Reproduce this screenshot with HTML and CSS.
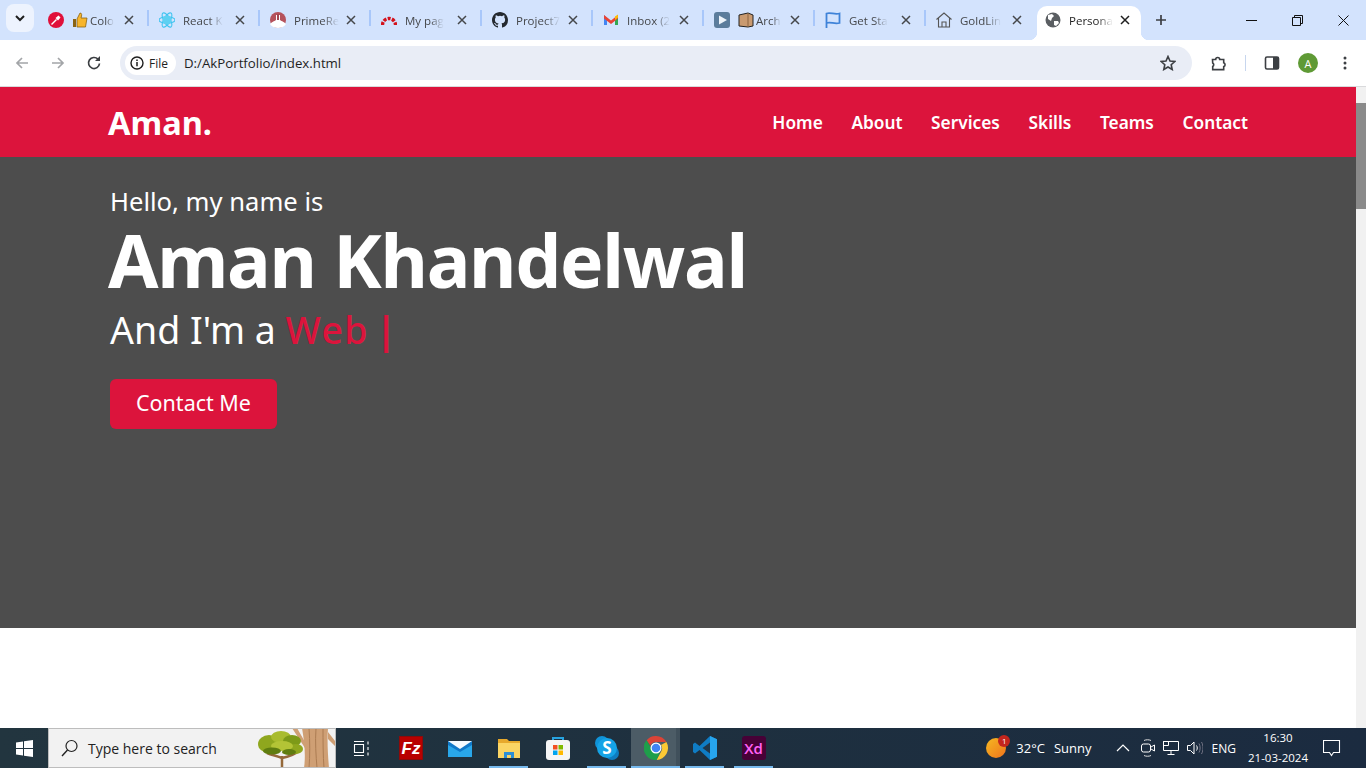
FILE: index.html
```html
<!DOCTYPE html>
<html lang="en">
  <head>
    <meta charset="UTF-8" />
    <meta name="viewport" content="width=device-width, initial-scale=1.0" />
    <title>Personal Portfolio</title>
    <link rel="stylesheet" href="styles.css">
  </head>
  <body>
    <!-- browser tabs -->
    <div class="tabstrip">
      <div class="tab-search">
        <svg width="12" height="12" viewBox="0 0 12 12"><path d="M2 4l4 4 4-4" fill="none" stroke="#1f1f1f" stroke-width="2"/></svg>
      </div>
      <div class="tab">
        <svg class="fav" viewBox="0 0 16 16"><circle cx="8" cy="8" r="8" fill="#e0103a"/><path d="M3.500 12.500l5-5" stroke="#fff" stroke-width="1.400"/><path d="M7.500 6l3-2.500 2 2L10 8.500z" fill="#fff"/></svg>
        <svg class="fav" viewBox="0 0 16 16"><path d="M1 7h3v8H1z" fill="#8a6414"/><path d="M5 7l3-6c2 0 2 2 1 5h6l-1.500 9H5z" fill="#f7b52c" stroke="#8a6414" stroke-width=".8"/></svg>
        <span class="tab-title tab-title-short">Colo</span>
        <svg class="tab-close" viewBox="0 0 10 10"><path d="M1 1l8 8M9 1l-8 8"/></svg>
      </div>
      <i class="tab-sep"></i>
      <div class="tab">
        <svg class="fav" viewBox="0 0 16 16"><g fill="none" stroke="#3fc4f0" stroke-width="1.100"><ellipse cx="8" cy="8" rx="8" ry="3.200"/><ellipse cx="8" cy="8" rx="8" ry="3.200" transform="rotate(60 8 8)"/><ellipse cx="8" cy="8" rx="8" ry="3.200" transform="rotate(120 8 8)"/></g><circle cx="8" cy="8" r="4.500" fill="#5ed0f2"/></svg>
        <span class="tab-title">React K</span>
        <svg class="tab-close" viewBox="0 0 10 10"><path d="M1 1l8 8M9 1l-8 8"/></svg>
      </div>
      <i class="tab-sep"></i>
      <div class="tab">
        <svg class="fav" viewBox="0 0 16 16"><circle cx="8" cy="8" r="8" fill="#b5525c"/><path d="M0 12c3-3 5-3 6-4V3h4v5c1 1 3 1 6 4-2 3-5 4-8 4s-6-1-8-4z" fill="#fff"/><path d="M7 2h2v6H7z" fill="#a34550"/></svg>
        <span class="tab-title">PrimeRe</span>
        <svg class="tab-close" viewBox="0 0 10 10"><path d="M1 1l8 8M9 1l-8 8"/></svg>
      </div>
      <i class="tab-sep"></i>
      <div class="tab">
        <svg class="fav" viewBox="0 0 16 16"><path d="M1.500 13a6.500 6.500 0 0 1 13 0" fill="none" stroke="#d3121c" stroke-width="3.400" stroke-dasharray="3 1.300"/></svg>
        <span class="tab-title">My pag</span>
        <svg class="tab-close" viewBox="0 0 10 10"><path d="M1 1l8 8M9 1l-8 8"/></svg>
      </div>
      <i class="tab-sep"></i>
      <div class="tab">
        <svg class="fav" viewBox="0 0 16 16"><path fill="#24292f" d="M8 0C3.580 0 0 3.580 0 8c0 3.540 2.290 6.530 5.470 7.590.4.070.55-.17.55-.38 0-.19-.01-.82-.01-1.490-2.010.37-2.530-.49-2.690-.94-.09-.23-.48-.94-.82-1.130-.28-.15-.68-.52-.01-.53.63-.01 1.080.58 1.230.82.720 1.210 1.870.87 2.330.66.070-.52.280-.87.510-1.070-1.780-.2-3.640-.89-3.640-3.950 0-.87.310-1.590.820-2.150-.08-.2-.36-1.020.08-2.120 0 0 .67-.21 2.200.82a7.420 7.420 0 0 1 4 0c1.530-1.040 2.200-.82 2.200-.82.440 1.100.16 1.920.08 2.120.51.560.82 1.270.82 2.150 0 3.070-1.870 3.750-3.650 3.950.290.250.540.730.540 1.480 0 1.070-.01 1.930-.01 2.200 0 .21.150.46.550.38A8.010 8.010 0 0 0 16 8c0-4.420-3.580-8-8-8z"/></svg>
        <span class="tab-title">Project7</span>
        <svg class="tab-close" viewBox="0 0 10 10"><path d="M1 1l8 8M9 1l-8 8"/></svg>
      </div>
      <i class="tab-sep"></i>
      <div class="tab">
        <svg class="fav" viewBox="0 0 16 16"><path d="M1 3v10h3V6z" fill="#4285f4"/><path d="M15 3v10h-3V6z" fill="#34a853"/><path d="M1 3l7 5.500L15 3v3.500L8 12 1 6.500z" fill="#ea4335"/><path d="M12 4.500L15 2.500v3L12 8z" fill="#fbbc04"/></svg>
        <span class="tab-title">Inbox (2</span>
        <svg class="tab-close" viewBox="0 0 10 10"><path d="M1 1l8 8M9 1l-8 8"/></svg>
      </div>
      <i class="tab-sep"></i>
      <div class="tab">
        <svg class="fav" viewBox="0 0 16 16"><rect width="16" height="16" rx="3" fill="#5c7d9c"/><path d="M5 3.500l8 4.500-8 4.500z" fill="#eef4fa"/></svg>
        <svg class="fav" viewBox="0 0 16 16"><path d="M1 3l9-2 5 2v11l-5 1-9-1z" fill="#c99a70" stroke="#222" stroke-width="1"/><path d="M10 1v14" stroke="#8c6440"/></svg>
        <span class="tab-title tab-title-short">Arch</span>
        <svg class="tab-close" viewBox="0 0 10 10"><path d="M1 1l8 8M9 1l-8 8"/></svg>
      </div>
      <i class="tab-sep"></i>
      <div class="tab">
        <svg class="fav" viewBox="0 0 16 16"><path d="M1.500 16V1.500c4-1.500 8 1.500 13 0V11c-5 1.500-9-1.500-13 0" fill="none" stroke="#3f83d8" stroke-width="1.800"/></svg>
        <span class="tab-title">Get Sta</span>
        <svg class="tab-close" viewBox="0 0 10 10"><path d="M1 1l8 8M9 1l-8 8"/></svg>
      </div>
      <i class="tab-sep"></i>
      <div class="tab">
        <svg class="fav" viewBox="0 0 16 16"><path d="M.5 7.500L8 1l7.500 6.500M2.500 6v9h11V6M6 15v-5h4v5" fill="none" stroke="#555" stroke-width="1.100"/></svg>
        <span class="tab-title">GoldLin</span>
        <svg class="tab-close" viewBox="0 0 10 10"><path d="M1 1l8 8M9 1l-8 8"/></svg>
      </div>
      <div class="tab tab-active">
        <svg class="fav" viewBox="0 0 16 16"><circle cx="8" cy="8" r="7.500" fill="#5a5e62"/><path d="M3 3l4-1 2 2-2 2-1 3-3-2zM9 9l4 0 1 2-3 3-2-1z" fill="#fff"/></svg>
        <span class="tab-title">Persona</span>
        <svg class="tab-close" viewBox="0 0 10 10"><path d="M1 1l8 8M9 1l-8 8"/></svg>
      </div>
      <svg class="new-tab" width="12" height="12" viewBox="0 0 12 12"><path d="M6 1v10M1 6h10" stroke="#3c3f43" stroke-width="1.700"/></svg>
      <div class="win-controls">
        <div class="win-btn"><svg width="11" height="11" viewBox="0 0 11 11"><path d="M0 5.500h11" stroke="#111" fill="none"/></svg></div>
        <div class="win-btn"><svg width="11" height="11" viewBox="0 0 11 11"><path d="M.5 2.500h8v8h-8zM2.500 2.500v-2h8v8h-2" stroke="#111" fill="none"/></svg></div>
        <div class="win-btn"><svg width="11" height="11" viewBox="0 0 11 11"><path d="M.5.500l10 10M10.500.500l-10 10" stroke="#111" fill="none"/></svg></div>
      </div>
    </div>

    <!-- address bar -->
    <div class="toolbar">
      <svg class="tool-icon tool-back" viewBox="0 0 16 16"><path d="M14 8H3M8 3L3 8l5 5" fill="none" stroke="#a3a5a8" stroke-width="1.700"/></svg>
      <svg class="tool-icon tool-forward" viewBox="0 0 16 16"><path d="M2 8h11M8 3l5 5-5 5" fill="none" stroke="#a3a5a8" stroke-width="1.700"/></svg>
      <svg class="tool-icon tool-reload" viewBox="0 0 16 16"><path d="M13.500 8.500A5.500 5.500 0 1 1 12 4.200" fill="none" stroke="#3c3f43" stroke-width="1.700"/><path d="M14 1v5H9z" fill="#3c3f43"/></svg>
      <div class="omnibox">
        <div class="site-chip">
          <svg width="14" height="14" viewBox="0 0 14 14"><circle cx="7" cy="7" r="6" fill="none" stroke="#1f1f1f" stroke-width="1.400"/><path d="M7 6v4.200M7 3.400v1.500" stroke="#1f1f1f" stroke-width="1.500"/></svg>
          <span>File</span>
        </div>
        <span class="url">D:/AkPortfolio/index.html</span>
        <svg class="star" width="16" height="16" viewBox="0 0 16 16"><path d="M8 1.500l2 4.500 4.800.5-3.600 3.200 1 4.800L8 12l-4.200 2.500 1-4.800L1.200 6.500 6 6z" fill="none" stroke="#3c3f43" stroke-width="1.600"/></svg>
      </div>
      <svg class="tool-icon tool-ext" viewBox="0 0 16 16"><path d="M1.500 4.500h3.200a2 2 0 0 1 4 0h4v3.300a2 2 0 0 1 0 3.800v3h-11V11.500a2 2 0 0 0 0-3.500z" fill="none" stroke="#3c3f43" stroke-width="1.600"/></svg>
      <i class="tool-sep"></i>
      <svg class="tool-icon tool-panel" viewBox="0 0 16 16"><rect x="1.500" y="2" width="13" height="12" rx="1.500" fill="none" stroke="#3c3f43" stroke-width="1.600"/><path d="M9 2h5.500v12H9z" fill="#3c3f43"/></svg>
      <div class="avatar">A</div>
      <svg class="tool-icon tool-menu" viewBox="0 0 16 16"><circle cx="8" cy="3" r="1.500" fill="#3c3f43"/><circle cx="8" cy="8" r="1.500" fill="#3c3f43"/><circle cx="8" cy="13" r="1.500" fill="#3c3f43"/></svg>
    </div>

    <!-- the portfolio page -->
    <div class="viewport">
      <div class="page">
        <nav class="navbar">
          <a class="logo" href="#">Aman.</a>
          <ul class="menu">
            <li><a href="#">Home</a></li>
            <li><a href="#">About</a></li>
            <li><a href="#">Services</a></li>
            <li><a href="#">Skills</a></li>
            <li><a href="#">Teams</a></li>
            <li><a href="#">Contact</a></li>
          </ul>
        </nav>
        <section class="hero">
          <div class="text-1">Hello, my name is</div>
          <div class="text-2">Aman Khandelwal</div>
          <div class="text-3">And I'm a <span class="typing">Web <span class="cursor">|</span></span></div>
          <a class="contact-btn" href="#">Contact Me</a>
        </section>
      </div>
      <div class="scrollbar"><div class="scroll-thumb"></div></div>
    </div>

    <!-- windows taskbar -->
    <div class="taskbar">
      <div class="start">
        <svg width="17" height="17" viewBox="0 0 17 17"><path d="M0 2.500l7-1v6.500H0zM8 1.300l9-1.300v8H8zM0 9h7v6.500l-7-1zM8 9h9v8l-9-1.300z" fill="#fff"/></svg>
      </div>
      <div class="search">
        <svg width="18" height="18" viewBox="0 0 18 18"><circle cx="10.500" cy="7" r="5.500" fill="none" stroke="#222" stroke-width="1.200"/><path d="M6.500 11L1 17" stroke="#222" stroke-width="1.400"/></svg>
        <span class="search-text">Type here to search</span>
        <svg class="tree" width="84" height="40" viewBox="0 0 84 40">
          <path d="M50 0h26c-1 14 0 28 1 40H52c2-14 0-28-2-40z" fill="#cf9f74"/>
          <path d="M57 0c1 14 1 28 0 40M64 0c-1 14 0 28 1 40M71 0c0 12 0 28 1 40" stroke="#ac7c52" fill="none"/>
          <path d="M76 4l7 9v5l-7-7zM40 0h5l8 14v6z" fill="#cf9f74"/>
          <path d="M30 40V28M30 30c-5-2-10-3-15-5M30 30c6-1 12-3 18-8" stroke="#94683a" stroke-width="2.500" fill="none"/>
          <ellipse cx="17" cy="16" rx="11" ry="9" fill="#8fa71e"/>
          <ellipse cx="29" cy="9" rx="10" ry="6" fill="#a9bc2e"/>
          <ellipse cx="40" cy="13" rx="9" ry="6" fill="#7d9a18"/>
          <ellipse cx="44" cy="21" rx="7" ry="5" fill="#8fa71e"/>
          <ellipse cx="30" cy="18" rx="11" ry="5" fill="#b3c436"/>
          <ellipse cx="20" cy="23" rx="9" ry="3.500" fill="#5f7d10"/>
          <ellipse cx="37" cy="24" rx="7" ry="3" fill="#5f7d10"/>
        </svg>
      </div>
      <div class="task-app task-view">
        <svg width="16" height="15" viewBox="0 0 16 15"><path d="M1 .5h10M1 14.500h10M1.500 3.500h9v8h-9zM15 .5v3M15 6v3M15 11.500v3" fill="none" stroke="#fff" stroke-width="1.100"/></svg>
      </div>
      <div class="task-app">
        <svg width="24" height="24" viewBox="0 0 24 24"><rect width="24" height="24" fill="#8c0a0a"/><rect x="1" y="1" width="22" height="22" fill="#b80000"/><text x="12" y="18" text-anchor="middle" class="fz-text">Fz</text></svg>
      </div>
      <div class="task-app">
        <svg width="24" height="24" viewBox="0 0 24 24"><path d="M0 5h24v16H0z" fill="#0f78c8"/><path d="M0 9l12 7 12-7v12H0z" fill="#29a7ea"/><path d="M0 5h24L12 13z" fill="#f4fafe"/></svg>
      </div>
      <div class="task-app task-open">
        <svg width="24" height="24" viewBox="0 0 24 24"><path d="M1 3h9l2 2h11v17H1z" fill="#e7a92c"/><path d="M1 7h22v15H1z" fill="#fbd564"/><path d="M7 16h10v6H7z" fill="#2d8fd5"/><path d="M10 19h4v3h-4z" fill="#fbd564"/></svg>
      </div>
      <div class="task-app">
        <svg width="24" height="24" viewBox="0 0 24 24"><path d="M7 5V2h10v3" fill="none" stroke="#27a3e0" stroke-width="2"/><rect y="4" width="24" height="20" rx="3" fill="#f5f5f5"/><path d="M7 9h4.500v4.500H7z" fill="#f25022"/><path d="M12.500 9H17v4.500h-4.500z" fill="#7fba00"/><path d="M7 14.500h4.500V19H7z" fill="#00a4ef"/><path d="M12.500 14.500H17V19h-4.500z" fill="#ffb900"/></svg>
      </div>
      <div class="task-app task-open">
        <svg width="24" height="24" viewBox="0 0 24 24"><circle cx="7" cy="7" r="7" fill="#1093d8"/><circle cx="17" cy="17" r="7" fill="#0e7cc0"/><circle cx="12" cy="12" r="10" fill="#15a3e6"/><text x="12" y="18" text-anchor="middle" class="skype-text">S</text></svg>
      </div>
      <div class="task-app task-open task-active">
        <svg width="24" height="24" viewBox="0 0 24 24"><path d="M12 0a12 12 0 0 1 10.400 6H12a6 6 0 0 0-5.600 3.700L2.600 4.300A12 12 0 0 1 12 0z" fill="#db4437"/><path d="M22.400 6A12 12 0 0 1 12.500 24l4.700-8.500A6 6 0 0 0 17 9z" fill="#fcc934"/><path d="M2.600 4.300L8 13.800a6 6 0 0 0 8 2.500L12.500 24A12 12 0 0 1 2.600 4.300z" fill="#1e9e4a"/><circle cx="12" cy="12" r="5.500" fill="#fff"/><circle cx="12" cy="12" r="4.300" fill="#4285f4"/></svg>
      </div>
      <div class="task-app task-open">
        <svg width="24" height="24" viewBox="0 0 24 24"><path d="M17 0l7 3.300v17.400L17 24 6.500 14 2 17.500 0 16v-8l2-1.500L6.500 10z" fill="#0f7cc4"/><path d="M17 0l7 3.300v17.400L17 24z" fill="#27a5ee"/><path d="M17 6.500L9.500 12l7.500 5.500z" fill="#20374a"/></svg>
      </div>
      <div class="task-app task-open">
        <div class="xd-icon">Xd</div>
      </div>

      <div class="tray">
        <div class="weather">
          <span class="sun"><b class="sun-badge">1</b></span>
          <span class="weather-temp">32°C</span>
          <span>Sunny</span>
        </div>
        <svg class="tray-chevron" width="14" height="8" viewBox="0 0 14 8"><path d="M1 7l6-6 6 6" fill="none" stroke="#fff" stroke-width="1.200"/></svg>
        <svg class="tray-cam" width="14" height="18" viewBox="0 0 14 18"><path d="M3 1.500c2-1 5-1 7 0M3 16.500c2 1 5 1 7 0" fill="none" stroke="#ddd"/><rect x=".5" y="5" width="9" height="8" rx="2" fill="none" stroke="#fff"/><path d="M10 8l3.500-2v6L10 10" fill="none" stroke="#fff"/></svg>
        <svg class="tray-net" width="16" height="16" viewBox="0 0 16 16"><path d="M.5 1.500h15v9H.5zM8 10.500v4M4.500 14.500h7M.5 1.500h5v4h-5z" fill="none" stroke="#fff"/></svg>
        <svg class="tray-net" width="16" height="14" viewBox="0 0 16 14"><path d="M.5 4.500h3L7 1v12L3.500 9.500h-3z" fill="none" stroke="#fff"/><path d="M9.500 4.500c1 1.500 1 3.500 0 5" fill="none" stroke="#fff"/><path d="M12 2.500c1.500 2.500 1.500 6.500 0 9M14.500 1c2 3.500 2 8.500 0 12" fill="none" stroke="#778"/></svg>
        <span class="lang">ENG</span>
        <div class="clock"><span>16:30</span><span>21-03-2024</span></div>
        <svg class="notify" width="18" height="17" viewBox="0 0 18 17"><path d="M.5.500h16v12h-6l-2 3-2-3h-6z" fill="none" stroke="#fff" stroke-width="1.100"/></svg>
      </div>
    </div>
  </body>
</html>
```

FILE: styles.css
```css
* {
  margin: 0;
  padding: 0;
  box-sizing: border-box;
}
html,
body {
  height: 100%;
  overflow: hidden;
}
body {
  display: flex;
  flex-direction: column;
  font-family: "Open Sans", "Noto Sans", sans-serif;
  background: #fff;
}
a {
  text-decoration: none;
  color: inherit;
}

/* tab strip */
.tabstrip {
  height: 40px;
  display: flex;
  align-items: center;
  background: #d3e3fd;
  padding-left: 6px;
}
.tab-search {
  width: 28px;
  height: 28px;
  border-radius: 8px;
  background: #edf3fe;
  display: flex;
  align-items: center;
  justify-content: center;
  margin-right: 4px;
  margin-top: -4px;
}
.tab {
  width: 109px;
  height: 34px;
  margin-top: 6px;
  padding: 0 13px 0 10px;
  display: flex;
  align-items: center;
  position: relative;
  flex: none;
}
.fav {
  width: 16px;
  height: 16px;
  flex: none;
  margin-right: 8px;
  margin-top: -6px;
}
.tab-title {
  font-size: 11.500px;
  color: #45474a;
  white-space: nowrap;
  margin-top: -6px;
  -webkit-mask-image: linear-gradient(to right, #000 65%, transparent);
  mask-image: linear-gradient(to right, #000 65%, transparent);
}
.tab-title-short {
  margin-left: -6px;
}
.tab-close {
  width: 10px;
  height: 10px;
  flex: none;
  margin-left: auto;
  margin-top: -6px;
  stroke: #45474a;
  stroke-width: 1.500;
  fill: none;
}
.tab-sep {
  width: 2px;
  height: 16px;
  background: #a8c7fa;
  flex: none;
  margin-top: -4px;
}
.tab-active {
  width: 104px;
  margin-left: 2px;
  padding: 0 11px 0 8px;
  background: #fff;
  border-radius: 10px 10px 0 0;
}
.tab-active .tab-title {
  color: #1f1f1f;
}
.tab-active .tab-close {
  stroke: #1f1f1f;
}
.tab-active::before,
.tab-active::after {
  content: "";
  position: absolute;
  bottom: 0;
  width: 8px;
  height: 8px;
}
.tab-active::before {
  left: -8px;
  background: radial-gradient(circle at 0 0, transparent 8px, #fff 8.500px);
}
.tab-active::after {
  right: -8px;
  background: radial-gradient(circle at 100% 0, transparent 8px, #fff 8.500px);
}
.new-tab {
  margin-left: 14px;
}
.win-controls {
  margin-left: auto;
  display: flex;
  height: 40px;
}
.win-btn {
  width: 46px;
  display: flex;
  align-items: center;
  justify-content: center;
}

/* toolbar */
.toolbar {
  height: 47px;
  background: #fff;
  border-radius: 8px 8px 0 0;
  border-bottom: 1px solid #d9dadc;
  display: flex;
  align-items: center;
  flex: none;
}
.tool-icon {
  width: 16px;
  height: 16px;
  flex: none;
}
.tool-back {
  margin-left: 14px;
}
.tool-forward,
.tool-reload {
  margin-left: 20px;
}
.omnibox {
  width: 1072px;
  height: 34px;
  margin-left: 18px;
  border-radius: 17px;
  background: #e9edf6;
  display: flex;
  align-items: center;
  padding: 0 16px 0 5px;
}
.site-chip {
  width: 51px;
  height: 24px;
  border-radius: 12px;
  background: #fff;
  display: flex;
  align-items: center;
  gap: 5px;
  padding-left: 5px;
  font-size: 12px;
  font-weight: 500;
  color: #1f1f1f;
}
.url {
  margin-left: 8px;
  font-size: 13.250px;
  color: #1f1f1f;
}
.star {
  margin-left: auto;
}
.tool-ext {
  margin-left: 19px;
}
.tool-sep {
  width: 1px;
  height: 16px;
  background: #c7d6ee;
  margin-left: 18px;
}
.tool-panel {
  margin-left: 18px;
}
.avatar {
  width: 20px;
  height: 20px;
  border-radius: 50%;
  background: #5f9a35;
  color: #fff;
  font-size: 11px;
  display: flex;
  align-items: center;
  justify-content: center;
  margin-left: 18px;
}
.tool-menu {
  margin-left: 19px;
}

/* page */
.viewport {
  flex: 1;
  min-height: 0;
  display: flex;
}
.page {
  flex: 1;
  min-width: 0;
  font-family: "Noto Sans", sans-serif;
}
.navbar {
  height: 70px;
  background: #dc143c;
  color: #fff;
  padding: 0 108px;
  display: flex;
  align-items: center;
  justify-content: space-between;
}
.logo {
  font-size: 32.500px;
  font-weight: 700;
}
.menu {
  display: flex;
  gap: 28.600px;
  list-style: none;
  font-size: 17.300px;
  font-weight: 600;
  padding-top: 1px;
}
.hero {
  height: 471px;
  background: #4d4d4d;
  color: #fff;
  padding: 27px 0 0 110px;
}
.text-1 {
  font-size: 25.600px;
  line-height: 36px;
}
.text-2 {
  font-size: 73px;
  font-weight: 700;
  line-height: 76px;
  letter-spacing: -1.300px;
  margin: 2px 0 0 -2px;
}
.text-3 {
  font-size: 37.500px;
  line-height: 48px;
  margin-top: 8px;
}
.typing {
  color: #dc143c;
  font-weight: 500;
  letter-spacing: 1.300px;
}
.cursor {
  font-weight: 700;
  margin-left: -4px;
}
.contact-btn {
  display: flex;
  align-items: center;
  justify-content: center;
  width: 167px;
  height: 50px;
  margin-top: 25px;
  padding-bottom: 3px;
  border-radius: 6px;
  background: #dc143c;
  font-size: 21.500px;
}
.scrollbar {
  width: 10px;
  background: #f1f1f1;
  padding-top: 16px;
}
.scroll-thumb {
  height: 106px;
  background: #8a8a8a;
}

/* taskbar */
.taskbar {
  height: 40px;
  flex: none;
  display: flex;
  align-items: center;
  background: linear-gradient(to right, #22353f, #1e303f 50%, #1b2b40);
  color: #fff;
}
.start {
  width: 48px;
  height: 40px;
  display: flex;
  align-items: center;
  justify-content: center;
  flex: none;
}
.search {
  width: 288px;
  height: 40px;
  background: #f2f2f2;
  border: 1px solid #bdbdbd;
  display: flex;
  align-items: center;
  padding-left: 12px;
  color: #222;
  overflow: hidden;
  flex: none;
}
.search-text {
  margin-left: 9px;
  font-size: 14px;
}
.tree {
  margin-left: auto;
  margin-right: -1px;
}
.task-app {
  width: 49px;
  height: 40px;
  flex: none;
  display: flex;
  align-items: center;
  justify-content: center;
  position: relative;
}
.task-view {
  width: 50px;
}
.task-open::after {
  content: "";
  position: absolute;
  left: 5px;
  right: 5px;
  bottom: 0;
  height: 2px;
  background: #76b9ed;
}
.task-active {
  background: #4c5c66;
  box-shadow: inset -4px 0 0 #40505b;
}
.task-active::after {
  left: 0;
  right: 0;
}
.fz-text {
  font-family: "Liberation Sans", sans-serif;
  font-size: 17px;
  font-weight: 700;
  font-style: italic;
  fill: #fff;
}
.skype-text {
  font-family: "Noto Sans", sans-serif;
  font-size: 17px;
  font-weight: 700;
  fill: #fff;
}
.xd-icon {
  width: 24px;
  height: 24px;
  border-radius: 3px;
  background: #470137;
  color: #ff61f6;
  font-size: 15px;
  font-weight: 600;
  display: flex;
  align-items: center;
  justify-content: center;
}
.tray {
  margin-left: auto;
  height: 40px;
  display: flex;
  align-items: center;
  font-size: 13px;
  padding-right: 25px;
}
.weather {
  display: flex;
  align-items: center;
  gap: 9px;
}
.weather-temp {
  margin-left: 1px;
}
.sun {
  width: 20px;
  height: 20px;
  border-radius: 50%;
  background: linear-gradient(135deg, #f5b921, #f0731c);
  position: relative;
}
.sun-badge {
  position: absolute;
  top: -3px;
  right: -4px;
  width: 12px;
  height: 12px;
  border-radius: 50%;
  background: #c4261d;
  font-size: 8px;
  font-weight: 400;
  line-height: 12px;
  text-align: center;
}
.tray-chevron {
  margin-left: 24px;
}
.tray-cam {
  margin-left: 11px;
}
.tray-net {
  margin-left: 8px;
}
.lang {
  margin-left: 9px;
  font-size: 12px;
}
.clock {
  display: flex;
  flex-direction: column;
  align-items: center;
  margin-left: 12px;
  font-size: 11.500px;
  line-height: 20px;
}
.notify {
  margin-left: 15px;
}
```
